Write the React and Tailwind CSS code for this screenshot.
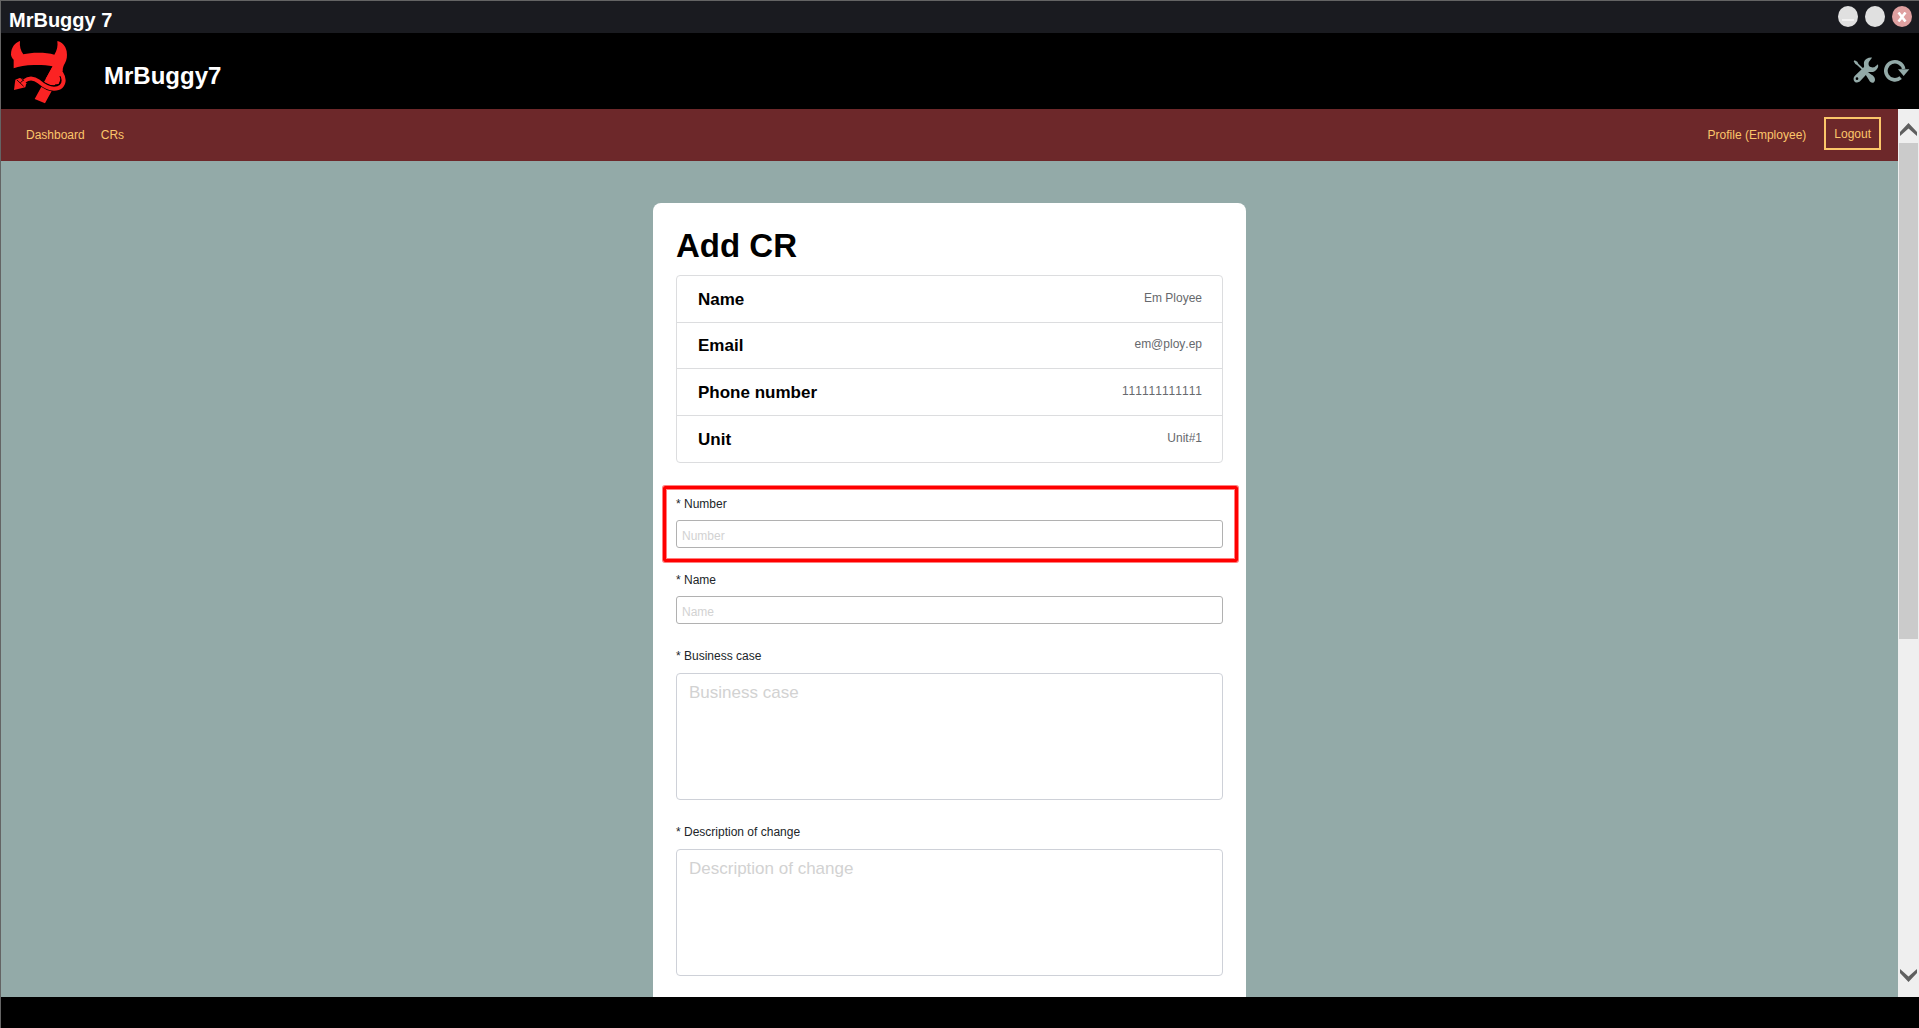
import React from "react";

function DevilLogo() {
  return (
    <svg viewBox="30 30 177 192" className="h-16 w-[59px]" role="img" aria-label="MrBuggy logo">
      <path
        d="M60 33C46 37 33 52 33 74C34 80 37 85 41 89V115C58 108 82 104 110 105C130 105 145 106 158 109L104 207L135 220L188 122C188 112 191 106 194 101C201 90 202 78 200 64C197 48 186 36 172 33C174 48 171 62 163 74C150 69 133 68 115 68C98 68 82 70 70 73C62 62 58 48 60 33Z"
        fill="#fb2323"
      />
      <path
        d="M73 153C90 140 104 145 117 155C130 166 145 176 162 176C180 176 191 166 191 151C191 142 188 136 183 130"
        fill="none"
        stroke="#000"
        strokeWidth="17"
      />
      <path d="M158 109L186 117L188 132L176 162C158 166 146 158 137 147Z" fill="#fb2323" />
      <path
        d="M110 144C134 162 146 168 162 168C175 168 183 160 183 150C183 145 182 142 180 138"
        fill="none"
        stroke="#000"
        strokeWidth="4"
      />
      <path
        d="M73 153C90 140 104 145 117 155C130 166 145 176 162 176C180 176 191 166 191 151C191 142 188 136 183 128"
        fill="none"
        stroke="#fb2323"
        strokeWidth="12"
      />
      <path d="M42 180L46 149L59 144L70 147L79 160L76 172Z" fill="#fb2323" />
      <path d="M51 150L71 169M61 158L72 149M64 145L70 152" fill="none" stroke="#000" strokeWidth="2.5" />
    </svg>
  );
}

function ToolsIcon() {
  return (
    <svg viewBox="38 52 78 78" className="size-[26px]" aria-hidden="true">
      <g fill="#93aaa8">
        <path d="M40 65L43 62L51 66L54 72L73 90L69 94L50 76L45 73Z" />
        <path d="M76 105L83 98C88 103 97 105 102 113C106 120 104 126 99 129C93 130 89 127 86 121Z" />
        <path
          fillRule="evenodd"
          d="M95 54C84 53 74 58 71 67C70 73 72 78 71 82L43 109C38 114 39 122 43 126C48 130 55 129 59 125L85 97C91 97 99 98 105 93C112 88 115 82 113 74L102 83C96 84 90 83 87 80C84 76 84 70 86 66ZM50 113A4 4 0 1 1 50 121A4 4 0 1 1 50 113Z"
        />
      </g>
    </svg>
  );
}

function ReloadIcon() {
  return (
    <svg viewBox="131 52 78 78" className="size-[26px]" aria-hidden="true">
      <path d="M181 114A27 27 0 1 1 190 88" fill="none" stroke="#93aaa8" strokeWidth="11" />
      <path d="M173 89H207L190 109Z" fill="#93aaa8" />
    </svg>
  );
}

function TitleBar() {
  return (
    <div className="flex h-8 shrink-0 items-start justify-between bg-[#1a1b20] pl-2 pr-[7px]">
      <span className="pt-[7px] text-xl leading-6 font-bold text-white">MrBuggy 7</span>
      <div className="flex gap-[7px] pt-[5px]">
        <button aria-label="Minimize" className="flex h-[21px] w-5 items-end justify-center rounded-[50%] bg-[#e0e0e0] pb-1.5">
          <span className="h-0.5 w-3 bg-[#f2f2f2]" />
        </button>
        <button aria-label="Maximize" className="h-[21px] w-5 rounded-[50%] bg-[#e0e0e0]" />
        <button aria-label="Close" className="flex h-[21px] w-5 items-center justify-center rounded-[50%] bg-[#dfa0a0]">
          <svg viewBox="0 0 10 10" className="size-[10px]" aria-hidden="true">
            <path d="M1.500 0.500L8.500 9.500M8.500 0.500L1.500 9.500" stroke="#fff" strokeWidth="2.600" />
          </svg>
        </button>
      </div>
    </div>
  );
}

function Header() {
  return (
    <header className="flex h-19 shrink-0 items-center bg-black pt-0.5 pl-[9px] pr-[9px]">
      <DevilLogo />
      <span className="ml-[35px] pt-2 text-2xl leading-7 font-bold text-white">MrBuggy7</span>
      <div className="ml-auto flex gap-[5px] pb-1">
        <button aria-label="Settings"><ToolsIcon /></button>
        <button aria-label="Reload"><ReloadIcon /></button>
      </div>
    </header>
  );
}

function NavBar() {
  return (
    <nav className="flex h-13 shrink-0 items-center bg-[#6d282a] pl-[25px] pr-[17px] text-xs text-[#fcc66a]">
      <a href="#dashboard">Dashboard</a>
      <a href="#crs" className="ml-4">CRs</a>
      <a href="#profile" className="ml-auto">Profile (Employee)</a>
      <button className="mb-1 ml-[18px] h-[33px] border-2 border-[#fcc66a] px-2 pt-0.5">Logout</button>
    </nav>
  );
}

const person = [
  ["Name", "Em Ployee"],
  ["Email", "em@ploy.ep"],
  ["Phone number", "111111111111"],
  ["Unit", "Unit#1"],
];

function PersonDetails() {
  return (
    <dl className="mb-[33px] grid h-[188px] grid-rows-4 divide-y divide-[#dcdddf] rounded border border-[#dcdddf]">
      {person.map(([term, value]) => (
        <div key={term} className="flex items-center justify-between pr-5 pl-[21px]">
          <dt className="pt-0.5 text-[17px] leading-6 font-bold text-black">{term}</dt>
          <dd className="pb-0.5 text-xs text-[#66696d] [font-kerning:none]">{value}</dd>
        </div>
      ))}
    </dl>
  );
}

function TextField({ id, label, highlighted }) {
  return (
    <div className="relative mb-6">
      <label htmlFor={id} className="block text-xs text-[#212529]">* {label}</label>
      <input
        id={id}
        placeholder={label}
        className="mt-2 block h-7 w-full rounded-[3px] border border-[#b1b1b1] bg-white px-[5px] pt-1 text-xs text-black outline-none placeholder:text-[#d2d2d2]"
      />
      {highlighted && (
        <div className="pointer-events-none absolute -top-[10px] -right-[15px] -bottom-[14px] -left-[13px] rounded-[2px] border-3 border-[#ff0000] shadow-[0_0_0_1px_rgba(255,0,0,0.5),inset_0_0_0_1px_rgba(255,0,0,0.5)]" />
      )}
    </div>
  );
}

function TextAreaField({ id, label }) {
  return (
    <div className="mb-6">
      <label htmlFor={id} className="block text-xs text-[#212529]">* {label}</label>
      <textarea
        id={id}
        placeholder={label}
        className="mt-[9px] block h-[127px] w-full resize-none rounded border border-[#ced1d8] bg-white px-3 py-[7px] text-[17px] leading-6 text-black outline-none placeholder:text-[#d2d2d2]"
      />
    </div>
  );
}

function Chevron({ down }) {
  return (
    <svg viewBox="0 0 17 13" className="h-[13px] w-[17px]" aria-hidden="true">
      <path
        d={down ? "M0 0V4L8.500 13L17 4V0L8.500 7.500Z" : "M0 13V9L8.500 0L17 9V13L8.500 5.500Z"}
        fill="#5f5f5f"
      />
    </svg>
  );
}

function ScrollBar() {
  return (
    <div className="flex w-[21px] shrink-0 flex-col items-center bg-[#efefef]">
      <button aria-label="Scroll up" className="flex h-[34px] items-end justify-center pb-[7px]"><Chevron /></button>
      <div className="w-full flex-1 px-px">
        <div className="h-[61%] bg-[#cbcbcb]" />
      </div>
      <button aria-label="Scroll down" className="flex h-[41px] items-end justify-center pb-[15px]"><Chevron down /></button>
    </div>
  );
}

export default function App() {
  return (
    <div className="flex h-screen flex-col overflow-hidden border-t border-l border-[#646464] bg-black font-['Liberation_Sans',Arial,sans-serif]">
      <TitleBar />
      <Header />
      <div className="flex min-h-0 flex-1">
        <div className="flex min-w-0 flex-1 flex-col overflow-hidden">
          <NavBar />
          <main className="flex min-h-0 flex-1 justify-center bg-[#93aaa8] pt-[42px]">
            <form className="w-full max-w-[593px] rounded-t-lg bg-white px-[23px] pt-[23px]">
              <h1 className="mb-[9px] text-[33px] leading-10 font-bold text-black">Add CR</h1>
              <PersonDetails />
              <TextField id="number" label="Number" highlighted />
              <TextField id="name" label="Name" />
              <TextAreaField id="business-case" label="Business case" />
              <TextAreaField id="description" label="Description of change" />
            </form>
          </main>
        </div>
        <ScrollBar />
      </div>
      <footer className="h-[31px] shrink-0 bg-black" />
    </div>
  );
}
